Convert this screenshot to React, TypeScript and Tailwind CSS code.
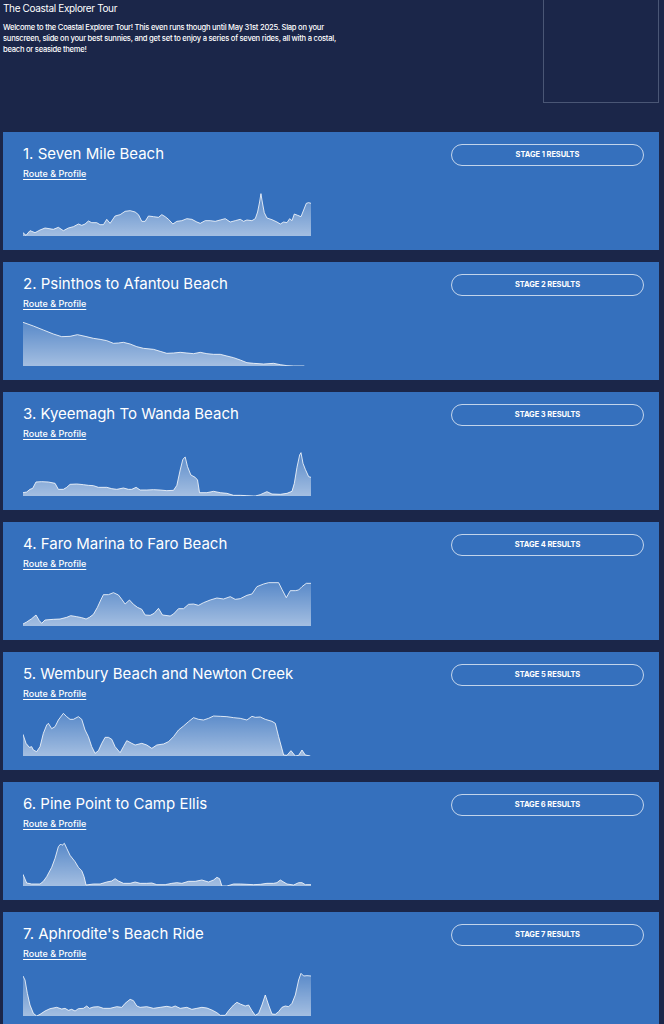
import React from "react";

type Stage = {
  n: number;
  name: string;
  base: number;
  pts: string;
};

// Elevation samples per stage: "x,y" pairs on an 863-wide grid, y grows downward,
// `base` is the y value of sea level for that profile.
const stages: Stage[] = [
  {
    n: 1,
    name: "Seven Mile Beach",
    base: 332,
    pts: "69,322 78,330 90,316 105,322 120,314 135,308 160,312 175,306 190,316 205,308 220,304 235,296 245,300 255,296 265,287 275,292 290,292 300,298 310,298 320,282 330,294 345,272 360,268 375,258 390,256 405,260 415,268 425,288 435,288 445,272 460,274 475,276 485,268 495,274 505,282 518,296 530,288 545,286 560,280 575,282 590,290 600,294 615,286 630,286 645,288 660,284 675,280 690,290 705,286 720,282 730,288 740,284 755,286 765,280 772,260 778,230 782,205 786,230 792,262 800,278 815,283 830,290 840,296 850,290 860,292 868,280 875,286 882,266 892,270 902,274 910,254 918,234 925,232 932,234",
  },
  {
    n: 2,
    name: "Psinthos to Afantou Beach",
    base: 318,
    pts: "69,187 100,198 130,210 160,222 185,230 210,229 232,224 255,229 280,235 300,238 320,242 340,250 355,249 370,247 390,252 410,260 430,265 460,268 480,274 500,280 520,279 540,277 560,279 580,281 600,277 620,281 640,283 660,283 680,288 700,293 720,300 740,308 760,310 790,312 820,310 840,314 860,317 880,318 912,318",
  },
  {
    n: 3,
    name: "Kyeemagh To Wanda Beach",
    base: 348,
    pts: "69,338 80,336 90,328 98,325 108,306 125,305 145,306 165,310 175,328 190,328 200,322 210,313 230,312 250,314 265,316 280,317 295,322 320,322 335,326 350,328 370,324 385,328 395,328 408,322 420,330 440,330 460,329 480,330 500,332 520,331 530,316 540,270 548,238 555,231 562,260 572,285 585,292 592,300 598,338 620,338 640,334 660,338 680,340 700,346 720,346 740,347 760,348 765,348 780,344 800,335 815,342 840,343 860,340 875,334 882,310 890,262 898,225 902,218 908,250 915,268 925,290 932,292",
  },
  {
    n: 4,
    name: "Faro Marina to Faro Beach",
    base: 318,
    pts: "69,312 80,306 95,296 108,285 118,302 125,310 135,300 160,298 180,297 200,292 212,287 230,290 245,293 258,297 268,292 280,283 292,262 302,240 310,224 325,224 340,218 355,225 365,238 375,252 388,240 400,253 412,262 425,268 435,285 450,286 462,280 475,265 487,285 510,288 520,282 535,266 550,266 565,253 580,252 595,256 610,248 630,240 650,234 670,237 690,230 705,238 720,236 740,226 755,222 770,200 790,192 805,188 835,188 845,208 858,233 870,212 885,212 895,210 905,200 918,190 932,190",
  },
  {
    n: 5,
    name: "Wembury Beach and Newton Creek",
    base: 348,
    pts: "69,283 78,310 88,322 95,320 100,330 110,335 120,320 130,280 140,255 145,250 155,266 165,260 175,240 190,220 200,230 210,238 220,238 235,230 245,238 255,270 265,290 275,320 285,340 295,332 305,310 315,292 325,292 335,298 345,320 360,338 370,320 380,302 395,310 405,315 425,310 440,315 455,325 470,315 490,312 505,305 520,290 535,270 550,258 565,245 580,233 595,238 610,240 625,235 640,228 660,229 680,230 700,233 720,235 740,240 755,229 765,232 780,231 795,238 815,244 825,250 835,290 850,345 860,346 872,332 885,348 895,346 905,330 915,345 930,348",
  },
  {
    n: 6,
    name: "Pine Point to Camp Ellis",
    base: 318,
    pts: "69,283 80,309 95,312 120,312 130,304 140,290 155,262 165,235 175,200 182,192 186,196 193,190 200,205 210,226 225,245 235,262 245,272 252,290 258,315 280,312 300,312 320,306 335,303 345,296 355,303 370,310 390,310 405,306 420,310 440,310 455,309 470,314 495,314 515,310 530,308 545,310 565,304 585,304 605,300 625,306 640,300 650,292 658,296 665,318 680,318 700,312 720,312 740,313 760,314 780,313 800,310 820,310 830,308 840,300 850,306 860,312 880,315 895,308 905,308 915,314 932,314",
  },
  {
    n: 7,
    name: "Aphrodite's Beach Ride",
    base: 348,
    pts: "69,228 75,240 82,280 90,315 100,340 110,348 120,343 135,333 150,326 170,322 185,327 195,325 205,331 215,328 225,333 235,326 250,325 260,318 268,325 280,321 295,320 310,325 330,325 350,320 365,322 375,310 390,298 400,302 410,318 420,322 440,320 460,325 480,322 500,319 515,322 525,318 540,325 560,322 575,328 590,325 605,322 620,324 635,330 650,338 660,346 675,346 685,332 700,315 710,307 720,312 735,318 745,315 755,332 765,346 775,340 785,315 795,285 805,315 815,342 825,343 835,335 845,322 855,318 865,320 875,310 885,285 895,240 902,220 910,228 920,227 932,228",
  },
];

const VW = 863;
const VH = 141;

function Profile({ stage }: { stage: Stage }) {
  const pts = stage.pts
    .trim()
    .split(/\s+/)
    .map((p) => {
      const [x, y] = p.split(",").map(Number);
      return [x - 69, y - stage.base + VH] as [number, number];
    });
  const line = pts.map(([x, y], i) => `${i ? "L" : "M"}${x},${y}`).join(" ");
  const first = pts[0];
  const last = pts[pts.length - 1];
  const area = `${line} L${last[0]},${VH} L${first[0]},${VH} Z`;
  const gid = `elev-${stage.n}`;
  return (
    <svg
      width={288}
      height={47}
      viewBox={`0 0 ${VW} ${VH}`}
      preserveAspectRatio="none"
      className="block"
    >
      <defs>
        <linearGradient id={gid} x1="0" y1="0" x2="0" y2="1">
          <stop offset="0%" stopColor="#ffffff" stopOpacity="0.18" />
          <stop offset="100%" stopColor="#ffffff" stopOpacity="0.55" />
        </linearGradient>
      </defs>
      <path d={area} fill={`url(#${gid})`} />
      <path
        d={line}
        fill="none"
        stroke="#ffffff"
        strokeOpacity="0.8"
        strokeWidth={1}
        vectorEffect="non-scaling-stroke"
        strokeLinejoin="round"
      />
    </svg>
  );
}

function StageCard({ stage }: { stage: Stage }) {
  return (
    <section className="flex h-[118px] justify-between bg-[#3570bd] pl-[20px] pr-[15px] pt-[12px]">
      <div className="flex flex-col">
        <h2 className="text-[15px] leading-[20px] font-normal text-white">
          {stage.n}. {stage.name}
        </h2>
        <a
          href="#"
          className="mt-[4px] w-fit text-[9px] leading-[12px] font-medium text-white underline underline-offset-[1.5px]"
        >
          Route &amp; Profile
        </a>
        <div className="mt-[9px]">
          <Profile stage={stage} />
        </div>
      </div>
      <button className="h-[22px] w-[193px] rounded-full border border-white/70 text-[7.5px] font-bold uppercase tracking-[-0.01em] text-white">
        Stage {stage.n} Results
      </button>
    </section>
  );
}

export default function App() {
  return (
    <div className="min-h-screen bg-[#1b2649] pb-[12px] font-['Inter','Noto_Sans',sans-serif] text-white">
      <header className="flex h-[132px] justify-between pl-[3px] pr-[5px]">
        <div className="w-[338px] pt-[1px]">
          <h1 className="text-[10px] leading-[14px] font-normal tracking-[-0.35px]">
            The Coastal Explorer Tour
          </h1>
          <p className="mt-[7px] text-[7.6px] leading-[11px] font-medium tracking-[-0.25px]">
            Welcome to the Coastal Explorer Tour! This even runs though until May 31st 2025. Slap on your
            sunscreen, slide on your best sunnies, and get set to enjoy a series of seven rides, all with a
            costal, beach or seaside theme!
          </p>
        </div>
        <div className="h-[103px] w-[116px] border border-t-0 border-[#4a5675]" />
      </header>
      <main className="flex flex-col gap-[12px] pl-[3px] pr-[5px]">
        {stages.map((s) => (
          <StageCard key={s.n} stage={s} />
        ))}
      </main>
    </div>
  );
}
